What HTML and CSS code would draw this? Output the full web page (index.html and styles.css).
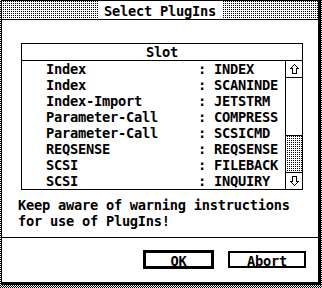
FILE: index.html
```html
<!DOCTYPE html>
<html>
<head>
<meta charset="utf-8">
<title>Select PlugIns</title>
<link rel="stylesheet" href="styles.css">
</head>
<body>
<div class="window">
  <div class="titlebar"><span class="title">Select PlugIns</span></div>
  <div class="content">
    <div class="list">
      <div class="list-head">Slot</div>
      <div class="list-main">
        <div class="rows">
          <div class="row"><span class="name">Index</span><span class="sep">:</span><span class="val">INDEX</span></div>
          <div class="row"><span class="name">Index</span><span class="sep">:</span><span class="val">SCANINDE</span></div>
          <div class="row"><span class="name">Index-Import</span><span class="sep">:</span><span class="val">JETSTRM</span></div>
          <div class="row"><span class="name">Parameter-Call</span><span class="sep">:</span><span class="val">COMPRESS</span></div>
          <div class="row"><span class="name">Parameter-Call</span><span class="sep">:</span><span class="val">SCSICMD</span></div>
          <div class="row"><span class="name">REQSENSE</span><span class="sep">:</span><span class="val">REQSENSE</span></div>
          <div class="row"><span class="name">SCSI</span><span class="sep">:</span><span class="val">FILEBACK</span></div>
          <div class="row"><span class="name">SCSI</span><span class="sep">:</span><span class="val">INQUIRY</span></div>
        </div>
        <div class="scrollbar">
          <div class="arrow up">
            <svg width="9" height="10" viewBox="0 0 9 10" shape-rendering="crispEdges"><path d="M4.5 0.5 L8.5 4.5 L6.5 4.5 L6.5 9.5 L2.5 9.5 L2.5 4.5 L0.5 4.5 Z" fill="none" stroke="#000" stroke-width="1"/></svg>
          </div>
          <div class="track"><div class="thumb"></div></div>
          <div class="arrow down">
            <svg width="9" height="10" viewBox="0 0 9 10" shape-rendering="crispEdges"><path d="M4.5 9.5 L8.5 5.5 L6.5 5.5 L6.5 0.5 L2.5 0.5 L2.5 5.5 L0.5 5.5 Z" fill="none" stroke="#000" stroke-width="1"/></svg>
          </div>
        </div>
      </div>
    </div>
    <p class="note">Keep aware of warning instructions<br>for use of PlugIns!</p>
  </div>
  <div class="footer">
    <button class="btn btn-default">OK</button>
    <button class="btn btn-abort"><span class="key">A</span>bort</button>
  </div>
</div>
</body>
</html>
```
FILE: styles.css
```css
html, body {
  margin: 0;
  padding: 0;
}

body {
  width: 322px;
  height: 288px;
  overflow: hidden;
  background: repeating-conic-gradient(#000 0 25%, #fff 0 50%) 0 0 / 2px 2px;
  font-family: "DejaVu Sans Mono", "Liberation Mono", monospace;
  font-weight: bold;
  font-size: 13.7px;
  letter-spacing: -0.25px;
  color: #000;
}

.window {
  margin-left: 1px;
  width: 320px;
  height: 285px;
  box-sizing: border-box;
  border: 1px solid #000;
  border-right-width: 3px;
  border-bottom-width: 3px;
  background: #fff;
  display: flex;
  flex-direction: column;
}

.titlebar {
  height: 19px;
  flex: none;
  box-sizing: border-box;
  border-bottom: 1px solid #000;
  background: conic-gradient(#000 0 25%, #fff 0) 0 0 / 2px 2px;
  display: flex;
  justify-content: center;
}

.title {
  background: #fff;
  padding: 0 6px;
  height: 18px;
  line-height: 21px;
  white-space: pre;
}

.content {
  flex: 1;
  padding: 23px 0 0 16px;
}

.list {
  margin-left: 3px;
  width: 282px;
  box-sizing: border-box;
  border: 1px solid #000;
}

.list-head {
  height: 16px;
  line-height: 16px;
  text-align: center;
  border-bottom: 1px solid #000;
}

.list-main {
  display: flex;
  height: 128px;
}

.rows {
  flex: 1;
}

.row {
  display: flex;
  height: 16px;
  line-height: 16px;
  padding-left: 24px;
  white-space: pre;
}

.name {
  width: 152px;
}

.sep {
  width: 16px;
}

.scrollbar {
  width: 16px;
  border-left: 1px solid #000;
  display: flex;
  flex-direction: column;
}

.arrow {
  height: 16px;
  flex: none;
  display: flex;
  justify-content: center;
  align-items: center;
}

.arrow svg {
  display: block;
}

.up {
  border-bottom: 1px solid #000;
}

.down {
  border-top: 1px solid #000;
}

.track {
  flex: 1;
  display: flex;
  flex-direction: column;
  justify-content: flex-end;
}

.thumb {
  height: 36px;
  border-top: 1px solid #000;
  background: conic-gradient(#000 0 25%, #fff 0) 0 0 / 2px 2px;
}

.note {
  margin: 7px 0 0 0;
  line-height: 16px;
  white-space: pre;
}

.footer {
  height: 45px;
  flex: none;
  box-sizing: border-box;
  border-top: 1px solid #000;
  display: flex;
  justify-content: flex-end;
  align-items: center;
  gap: 14px;
  padding: 0 12px 2px 0;
}

.btn {
  font: inherit;
  letter-spacing: inherit;
  color: #000;
  background: #fff;
  border: 2px solid #000;
  border-radius: 0;
  margin: 0;
  box-sizing: border-box;
  display: flex;
  align-items: center;
  justify-content: center;
  line-height: 14px;
  padding: 3px 0 0 0;
}

.btn-default {
  width: 71px;
  height: 19px;
  border-width: 3px;
}

.btn-abort {
  width: 78px;
  height: 17px;
}

.key {
  text-decoration: underline;
  text-decoration-thickness: 1px;
  text-underline-offset: 1px;
}
```
